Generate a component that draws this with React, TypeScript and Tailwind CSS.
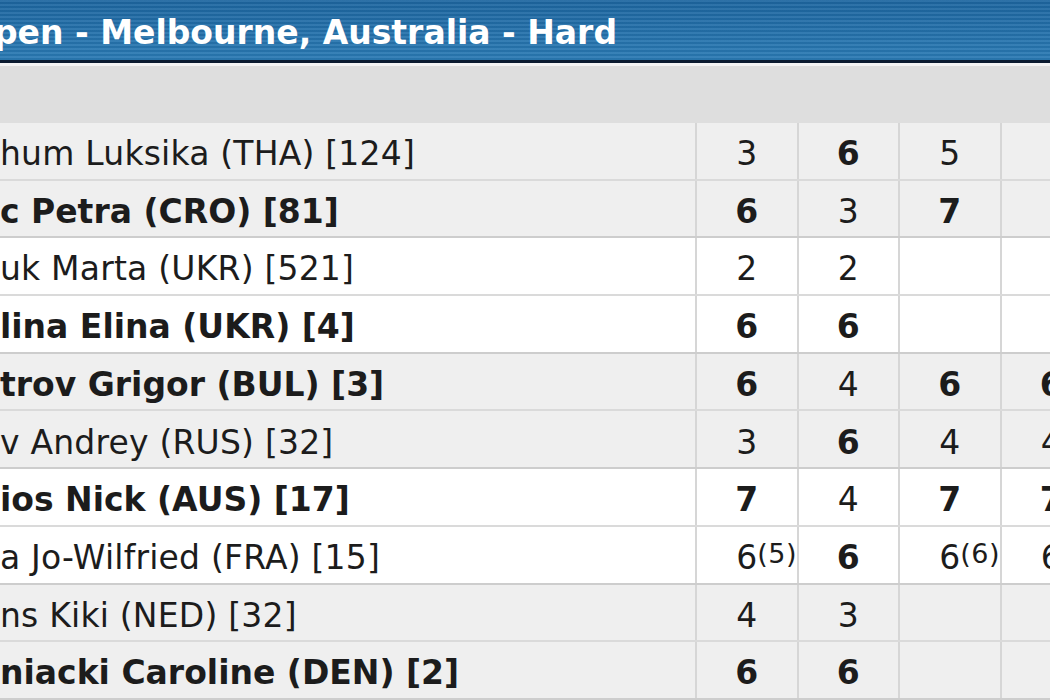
import React from 'react';

type SetScore = { s: string; w?: boolean; tb?: string } | null;

interface Row {
  name: string;
  win: boolean;
  sets: SetScore[];
}

// pairs of rows = one match, backgrounds alternate per match
const MATCHES: Row[][] = [
  [
    { name: 'hum Luksika (THA) [124]', win: false, sets: [{ s: '3' }, { s: '6', w: true }, { s: '5' }, null] },
    { name: 'c Petra (CRO) [81]', win: true, sets: [{ s: '6', w: true }, { s: '3' }, { s: '7', w: true }, null] },
  ],
  [
    { name: 'uk Marta (UKR) [521]', win: false, sets: [{ s: '2' }, { s: '2' }, null, null] },
    { name: 'lina Elina (UKR) [4]', win: true, sets: [{ s: '6', w: true }, { s: '6', w: true }, null, null] },
  ],
  [
    { name: 'trov Grigor (BUL) [3]', win: true, sets: [{ s: '6', w: true }, { s: '4' }, { s: '6', w: true }, { s: '6', w: true }] },
    { name: 'v Andrey (RUS) [32]', win: false, sets: [{ s: '3' }, { s: '6', w: true }, { s: '4' }, { s: '4' }] },
  ],
  [
    { name: 'ios Nick (AUS) [17]', win: true, sets: [{ s: '7', w: true }, { s: '4' }, { s: '7', w: true }, { s: '7', w: true }] },
    { name: 'a Jo-Wilfried (FRA) [15]', win: false, sets: [{ s: '6', tb: '(5)' }, { s: '6', w: true }, { s: '6', tb: '(6)' }, { s: '6', tb: '(4)' }] },
  ],
  [
    { name: 'ns Kiki (NED) [32]', win: false, sets: [{ s: '4' }, { s: '3' }, null, null] },
    { name: 'niacki Caroline (DEN) [2]', win: true, sets: [{ s: '6', w: true }, { s: '6', w: true }, null, null] },
  ],
];

function ScoreCell({ set }: { set: SetScore }) {
  return (
    <div className="border-l-2 border-[#d6d6d6] flex items-center justify-center pt-[6px]">
      {set && (
        <span className={`relative ${set.w ? 'font-bold' : 'font-normal'}`}>
          {set.s}
          {set.tb && (
            <span className="absolute left-full bottom-[15px] text-[27px] leading-none font-normal tracking-[0.5px]">
              {set.tb}
            </span>
          )}
        </span>
      )}
    </div>
  );
}

export default function App() {
  return (
    <div className="w-[1050px] h-[700px] overflow-hidden bg-white font-['DejaVu_Sans',Verdana,sans-serif] text-[#1c1c1c]">
      <div className="h-[60px] flex items-center pt-[5px] bg-[repeating-linear-gradient(180deg,rgba(255,255,255,0.07)_0px,rgba(255,255,255,0.07)_2px,rgba(0,0,0,0.05)_2px,rgba(0,0,0,0.05)_4px),linear-gradient(180deg,#1d66a0,#2a7ab4)]">
        <h1 className="-ml-[6px] text-[33px] font-bold text-white whitespace-nowrap leading-none">
          pen - Melbourne, Australia - Hard
        </h1>
      </div>
      <div className="h-[3px] bg-[#0b1b30]" />
      <div className="h-[3px] bg-[#f4f4f4]" />
      <div className="h-[57px] bg-[#dedede]" />

      {MATCHES.map((match, mi) => (
        <div key={mi} className={mi % 2 === 0 ? 'bg-[#efefef]' : 'bg-white'}>
          {match.map((row, ri) => (
            <div
              key={ri}
              className={`h-[57.7px] grid grid-cols-[695px_101.5px_101.5px_101.5px_101.5px] text-[33px] border-b-2 ${
                ri === 1 ? 'border-[#cdcdcd]' : 'border-[#dadada]'
              }`}
            >
              <div
                className={`flex items-center pt-[6px] whitespace-nowrap ${
                  row.win ? 'font-bold' : 'font-normal tracking-[0.2px]'
                }`}
              >
                {row.name}
              </div>
              {row.sets.map((set, si) => (
                <ScoreCell key={si} set={set} />
              ))}
            </div>
          ))}
        </div>
      ))}
    </div>
  );
}
